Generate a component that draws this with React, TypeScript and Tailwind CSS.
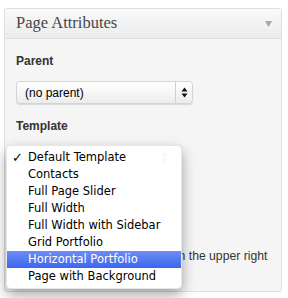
import { FC } from 'react';

const templates = [
    'Default Template',
    'Contacts',
    'Full Page Slider',
    'Full Width',
    'Full Width with Sidebar',
    'Grid Portfolio',
    'Horizontal Portfolio',
    'Page with Background',
];

const Arrows: FC = () => (
    <svg width="7" height="11" viewBox="0 0 7 11">
        <path d="M3.5 0.5 L6.5 4.5 L0.5 4.5 Z" fill="#111" />
        <path d="M3.5 10.5 L6.5 6.5 L0.5 6.5 Z" fill="#111" />
    </svg>
);

const FakeSelect: FC<{ label?: string; width: string }> = ({ label, width }) => (
    <div className={`flex h-[23px] ${width} items-center rounded-[4px] border border-[#d4d4d4] bg-gradient-to-b from-white to-[#ececec] shadow-[0_1px_1px_rgba(0,0,0,0.12)]`}>
        <span className="flex-1 pl-[8px] text-[12px] text-black">{label}</span>
        <span className="flex h-full w-[17px] items-center justify-center border-l border-[#cfcfcf]">
            <Arrows />
        </span>
    </div>
);

const App: FC = () => {
    const selected = 'Default Template';
    const hovered = 'Horizontal Portfolio';

    return (
        <div className="relative h-[298px] w-[288px] bg-white px-1 pt-2 font-['Liberation_Sans',Arial,sans-serif]">
            <div className="h-[284px] w-[278px] overflow-hidden rounded-[3px] border border-[#dfdfdf] bg-[#f5f5f5]">
                <div className="flex h-[30px] items-center justify-between border-b border-[#dfdfdf] bg-gradient-to-b from-[#f9f9f9] to-[#ececec] pl-[11px] pr-[9px]">
                    <span className="font-['Liberation_Serif',Georgia,serif] text-[16.5px] text-[#464646]">Page Attributes</span>
                    <svg width="7" height="6" viewBox="0 0 7 6">
                        <path d="M0 0 L7 0 L3.5 6 Z" fill="#a8a8a8" />
                    </svg>
                </div>
                <div className="flex flex-col items-start px-[11px]">
                    <p className="mt-[14px] text-[12px] font-bold leading-[16px] text-[#333]">Parent</p>
                    <div className="mt-[12px]">
                        <FakeSelect label="(no parent)" width="w-[177px]" />
                    </div>
                    <p className="mt-[14px] text-[12px] font-bold leading-[16px] text-[#333]">Template</p>
                    {/* the open menu covers this select */}
                    <div className="mt-[12px]">
                        <FakeSelect width="w-[157px]" />
                    </div>
                    <div className="mt-[38px] h-[22px] w-[40px] rounded-[3px] border border-[#dfdfdf] bg-white" />
                    <p className="mt-[20px] whitespace-nowrap text-[12.2px] leading-[14px] text-[#333]">
                        Need help? Use the Help tab in the upper right
                    </p>
                </div>
            </div>

            <div className="absolute left-[6px] top-[145px] h-[144px] w-[176px] rounded-[5px] border border-black/10 bg-white/[0.97] pt-[3px] shadow-[0_6px_14px_rgba(0,0,0,0.35)] font-['DejaVu_Sans',Verdana,sans-serif]">
                {templates.map((t) => (
                    <div
                        key={t}
                        className={
                            t === hovered
                                ? 'relative flex h-[17px] items-center bg-gradient-to-b from-[#6d8cf6] to-[#3b67ee] pl-[21px] text-[11.5px] text-white'
                                : 'relative flex h-[17px] items-center pl-[21px] text-[11.5px] text-black'
                        }>
                        {t === selected && <span className="absolute left-[5px] text-[13px] font-bold">✓</span>}
                        {t}
                    </div>
                ))}
            </div>
        </div>
    );
};

export default App;
